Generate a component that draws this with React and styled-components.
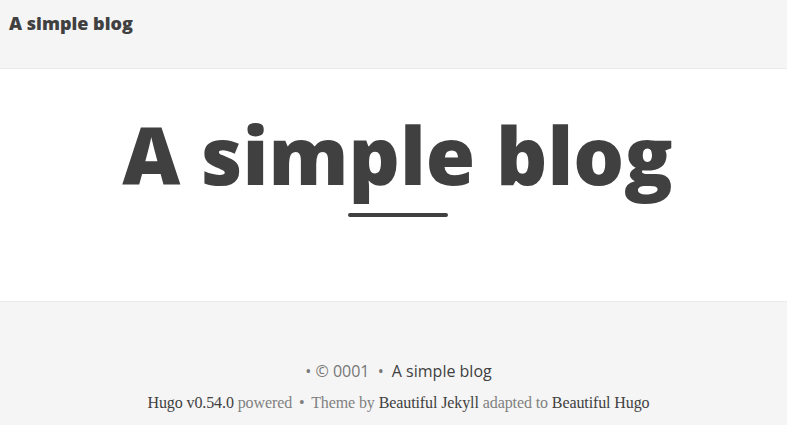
import React from 'react';
import styled, {createGlobalStyle} from 'styled-components';

const GlobalStyle = createGlobalStyle`
    html, body {
        margin: 0;
        padding: 0;
        background: #ffffff;
        color: #404040;
    }
`;

const Page = styled.div`
    display: flex;
    flex-direction: column;
    min-height: 425px;
    background: #f5f5f5;
`;

const Navbar = styled.nav`
    display: flex;
    align-items: center;
    height: 68px;
    padding: 0 9px;
    background: #f5f5f5;
    border-bottom: 1px solid #eaeaea;
`;

const Brand = styled.a`
    font-family: "Open Sans", sans-serif;
    font-weight: 800;
    font-size: 18px;
    color: #404040;
    text-decoration: none;
    margin-top: -22px;
`;

const Header = styled.header`
    display: flex;
    flex-direction: column;
    align-items: center;
    background: #ffffff;
    padding: 41px 0 84px 8px;
    border-bottom: 1px solid #eaeaea;
`;

const Heading = styled.h1`
    margin: 0;
    font-family: "Open Sans", sans-serif;
    font-weight: 800;
    font-size: 80px;
    line-height: 88px;
    color: #404040;
`;

const Rule = styled.hr`
    width: 100px;
    margin: 15px auto 0;
    border: 0;
    height: 4px;
    border-radius: 3px;
    background: #404040;
`;

const Footer = styled.footer`
    display: flex;
    flex-direction: column;
    align-items: center;
    padding: 58px 0 10px 10px;
    background: #f5f5f5;
`;

const Copyright = styled.p`
    margin: 0;
    font-family: "Open Sans", sans-serif;
    font-size: 16px;
    line-height: 22px;
    color: #777777;
`;

const Credits = styled.p`
    margin: 11px 0 0;
    font-family: "Liberation Serif", serif;
    font-size: 16px;
    line-height: 20px;
    letter-spacing: -0.1px;
    color: #808080;
`;

const Link = styled.a`
    color: #404040;
    text-decoration: none;
`;

const Sep = styled.span`
    margin: 0 ${({$gap}) => $gap}px;
`;

export default function App() {
    return (
        <>
            <GlobalStyle/>
            <Page>
                <Navbar>
                    <Brand href="#">A simple blog</Brand>
                </Navbar>
                <Header>
                    <Heading>A simple blog</Heading>
                    <Rule/>
                </Header>
                <Footer>
                    <Copyright>
                        <Sep $gap={0}>•</Sep> © 0001 <Sep $gap={4}>•</Sep> <Link href="#">A simple blog</Link>
                    </Copyright>
                    <Credits>
                        <Link href="#">Hugo v0.54.0</Link> powered <Sep $gap={3}>•</Sep> Theme by <Link href="#">Beautiful Jekyll</Link> adapted to <Link href="#">Beautiful Hugo</Link>
                    </Credits>
                </Footer>
            </Page>
        </>
    );
}
